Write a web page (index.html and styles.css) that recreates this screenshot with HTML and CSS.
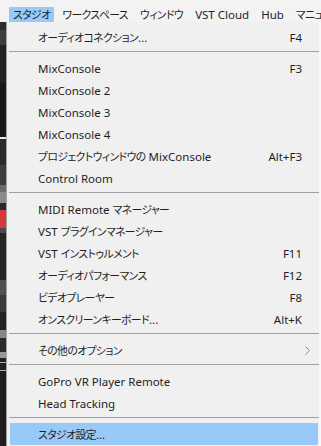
FILE: index.html
```html
<!DOCTYPE html>
<html lang="ja">
<head>
<meta charset="utf-8">
<link rel="stylesheet" href="styles.css">
</head>
<body>
<div class="menubar">
  <span class="mb-item active"><span class="ja">スタジオ</span></span>
  <span class="mb-item"><span class="ja">ワークスペース</span></span>
  <span class="mb-item"><span class="ja">ウィンドウ</span></span>
  <span class="mb-item">VST Cloud</span>
  <span class="mb-item">Hub</span>
  <span class="mb-item"><span class="ja">マニュアル</span></span>
</div>
<div class="below">
  <div class="strip">
    <i class="s s1"></i><i class="s s2"></i><i class="s s3"></i><i class="s s4"></i>
    <i class="s s5"></i><i class="s s6"></i><i class="s s7"></i><i class="s s8"></i>
    <i class="s s9"></i><i class="s s10"></i><i class="s s11"></i><i class="s s12"></i>
    <i class="s s13"></i><i class="s s14"></i><i class="s s15"></i><i class="s s16"></i>
    <i class="s s17"></i><i class="s s18"></i><i class="s s19"></i><i class="s s20"></i>
    <i class="s s21"></i><i class="s s22"></i><i class="s s23"></i><i class="s s24"></i>
  </div>
  <div class="dropdown">
    <div class="row"><span class="label"><span class="ja">オーディオコネクション</span>...</span><span class="key">F4</span></div>
    <div class="sep"></div>
    <div class="row"><span class="label">MixConsole</span><span class="key">F3</span></div>
    <div class="row"><span class="label">MixConsole 2</span></div>
    <div class="row"><span class="label">MixConsole 3</span></div>
    <div class="row"><span class="label">MixConsole 4</span></div>
    <div class="row"><span class="label"><span class="ja">プロジェクトウィンドウの</span> MixConsole</span><span class="key">Alt+F3</span></div>
    <div class="row"><span class="label">Control Room</span></div>
    <div class="sep"></div>
    <div class="row"><span class="label">MIDI Remote <span class="ja">マネージャー</span></span></div>
    <div class="row"><span class="label">VST <span class="ja">プラグインマネージャー</span></span></div>
    <div class="row"><span class="label">VST <span class="ja">インストゥルメント</span></span><span class="key">F11</span></div>
    <div class="row"><span class="label"><span class="ja">オーディオパフォーマンス</span></span><span class="key">F12</span></div>
    <div class="row"><span class="label"><span class="ja">ビデオプレーヤー</span></span><span class="key">F8</span></div>
    <div class="row"><span class="label"><span class="ja">オンスクリーンキーボード</span>...</span><span class="key">Alt+K</span></div>
    <div class="sep"></div>
    <div class="row"><span class="label"><span class="ja">その他のオプション</span></span><svg class="arrow" width="5" height="9" viewBox="0 0 5 9"><polyline points="0.5,0.5 4.5,4.5 0.5,8.5" fill="none" stroke="#8a8a8a" stroke-width="1"/></svg></div>
    <div class="sep"></div>
    <div class="row"><span class="label">GoPro VR Player Remote</span></div>
    <div class="row"><span class="label">Head Tracking</span></div>
    <div class="sep"></div>
    <div class="row hl"><span class="label"><span class="ja">スタジオ設定</span>...</span></div>
  </div>
</div>
</body>
</html>
```
FILE: styles.css
```css
* { box-sizing: border-box; margin: 0; padding: 0; }
html, body {
  width: 321px;
  height: 446px;
  overflow: hidden;
  background: #f0f0f0;
}
body {
  font-family: "Noto Sans", "Noto Sans CJK JP", sans-serif;
  font-size: 11.5px;
  color: #1f1f1f;
}
.ja {
  font-family: "Noto Sans CJK JP", sans-serif;
  font-size: 10.8px;
  letter-spacing: -0.55px;
  font-feature-settings: "palt";
}
.menubar {
  height: 22px;
  padding: 7px 0 0 9px;
  display: flex;
  gap: 4px;
  background: #f3f3f3;
  white-space: nowrap;
  overflow: hidden;
}
.mb-item {
  height: 15px;
  line-height: 15px;
  padding: 0 4px;
  flex: none;
}
.mb-item.active { background: #99c9f8; }
.below {
  display: flex;
  height: 424px;
}
.strip {
  width: 6px;
  display: flex;
  flex-direction: column;
  background: #1e1e1e;
}
.s { display: block; flex: none; }
.s1 { height: 8px; background: #2b2b2b; }
.s2 { height: 15px; background: #3d3d3d; }
.s3 { height: 38px; background: #222; }
.s4 { height: 54px; background: #191919; }
.s5 { height: 2px; background: #e8e8e8; }
.s6 { height: 26px; background: #2a2a2a; }
.s7 { height: 20px; background: #3e3e3e; }
.s8 { height: 7px; background: #6a6a6a; }
.s9 { height: 11px; background: #8a8a8a; }
.s10 { height: 7px; background: #2a2a2a; }
.s11 { height: 18px; background: #d83a3a; }
.s12 { height: 5px; background: #4a4a4a; }
.s13 { height: 47px; background: #252525; }
.s14 { height: 15px; background: #505050; }
.s15 { height: 17px; background: #3a3a3a; }
.s16 { height: 18px; background: #222; }
.s17 { height: 8px; background: #888; }
.s18 { height: 14px; background: #2a2a2a; }
.s19 { height: 6px; background: #999; }
.s20 { height: 4px; background: #222; }
.s21 { height: 1px; background: #aaa; }
.s22 { height: 7px; background: #222; }
.s23 { height: 1px; background: #aaa; }
.s24 { height: 75px; background: #1e1e1e; }
.dropdown {
  flex: 1;
  padding-top: 4px;
  background: #f0f0f0;
  border-left: 1px solid #a0a0a0;
  border-right: 2px solid #f7f7f7;
  display: flex;
  flex-direction: column;
}
.row {
  height: 22px;
  margin: 0 1px 0 3px;
  padding: 0 16px 0 28px;
  display: flex;
  align-items: center;
  justify-content: space-between;
  white-space: nowrap;
}
.row.hl { background: #99c9f8; }
.arrow { margin-right: -8px; }
.sep {
  height: 9px;
  margin: 0 0 0 2px;
  padding-top: 3px;
}
.sep::before {
  content: "";
  display: block;
  height: 1px;
  background: #a0a0a0;
}
```
